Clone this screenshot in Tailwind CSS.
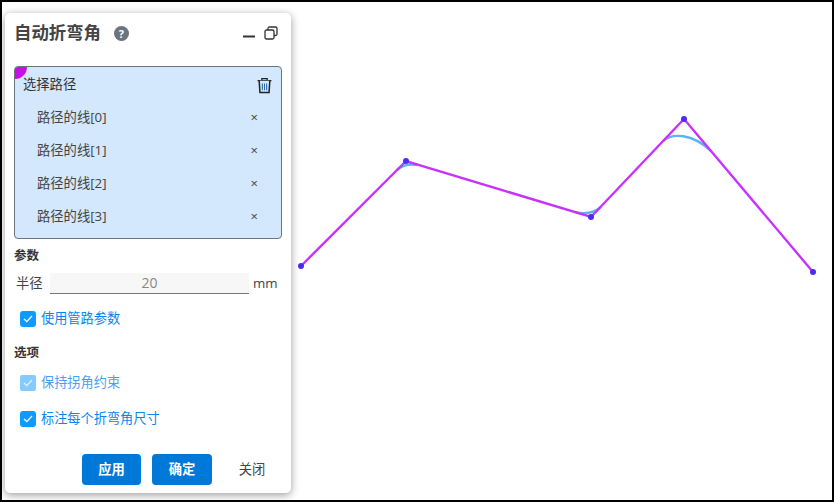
<!DOCTYPE html>
<html lang="zh">
<head>
<meta charset="UTF-8" />
<title>自动折弯角</title>
<script src="https://cdn.jsdelivr.net/npm/@tailwindcss/browser@4"></script>
</head>
<body class="bg-white">
<div class="relative w-[834px] h-[502px] overflow-hidden bg-white border-2 border-black font-['Open_Sans','Noto_Sans_CJK_SC',sans-serif] text-[#333]">

  <!-- canvas, shifted -2px for the border -->
  <svg class="absolute left-[-2px] top-[-2px]" width="834" height="502" viewBox="0 0 834 502" fill="none">
    <path d="M397 170Q405 163 417 165" stroke="#5cb3fa" stroke-width="2.4" />
    <path d="M575 212Q590 216 601 207" stroke="#5cb3fa" stroke-width="2.4" />
    <path d="M663 141C672 133 692 133 711 151" stroke="#5cb3fa" stroke-width="2.4" />
    <path d="M301 266L406 161L591 217L684 119L813 272" stroke="#c832ff" stroke-width="2.4" />
    <g fill="#4b2cf5">
      <circle cx="301" cy="266" r="3" />
      <circle cx="406" cy="161" r="3" />
      <circle cx="591" cy="217" r="3" />
      <circle cx="684" cy="119" r="3" />
      <circle cx="813" cy="272" r="3" />
    </g>
  </svg>

  <!-- dialog -->
  <div class="absolute left-[3px] top-[11px] w-[286px] h-[480px] bg-white rounded-[5px] shadow-[0_2px_8px_rgba(0,0,0,0.4)] flex flex-col pl-[9px] pr-[9px]">
    <div class="flex items-center h-[40px] shrink-0">
      <span class="text-[17.4px] font-bold text-[#444] leading-none">自动折弯角</span>
      <span class="ml-[13px] w-[15px] h-[15px] rounded-full bg-[#6c757d] text-white text-[11px] font-bold flex items-center justify-center leading-none">?</span>
      <svg class="ml-auto" width="14" height="14" viewBox="0 0 14 14" fill="none"><path d="M1 10.5H13" stroke="#333" stroke-width="2"/></svg>
      <svg class="ml-[8px] mr-[4px]" width="14" height="14" viewBox="0 0 14 14" fill="none" stroke="#333" stroke-width="1.3"><rect x="1" y="4" width="9" height="9" rx="1.5"/><path d="M4 4V2.5Q4 1 5.5 1H11.5Q13 1 13 2.5V8Q13 9.5 11.5 9.5H10"/></svg>
    </div>

    <!-- selection list -->
    <div class="relative mt-[13px] h-[173px] shrink-0 bg-[#d3e7fd] border border-[#6c757d] rounded-[4px] overflow-hidden">
      <div class="absolute left-[-12px] top-[-12px] w-[24px] h-[24px] rounded-full bg-[#c80fe8]"></div>
      <div class="flex items-center justify-between h-[36px] pl-[8px] pr-[9px] text-[13.3px]">
        <span>选择路径</span>
        <svg width="15" height="17" viewBox="0 0 14 16" fill="none">
          <path d="M0.5 3.5H13.5M4.5 3V1.5H9.5V3" stroke="#222" stroke-width="1.2"/>
          <path d="M2 3.5L2.7 14.5H11.3L12 3.5" stroke="#222" stroke-width="1.4" fill="#d3e7fd"/>
          <path d="M5 6V12.5M7 6V12.5M9 6V12.5" stroke="#2b6cb0" stroke-width="1"/>
        </svg>
      </div>
      <div class="flex flex-col mt-[-2px] text-[13.3px] text-[#444]">
        <div class="flex items-center justify-between h-[33px] pl-[22px] pr-[23px]"><span>路径的线[0]</span><span class="text-[13px] leading-none">×</span></div>
        <div class="flex items-center justify-between h-[33px] pl-[22px] pr-[23px]"><span>路径的线[1]</span><span class="text-[13px] leading-none">×</span></div>
        <div class="flex items-center justify-between h-[33px] pl-[22px] pr-[23px]"><span>路径的线[2]</span><span class="text-[13px] leading-none">×</span></div>
        <div class="flex items-center justify-between h-[33px] pl-[22px] pr-[23px]"><span>路径的线[3]</span><span class="text-[13px] leading-none">×</span></div>
      </div>
    </div>

    <div class="mt-[8px] text-[12.5px] font-bold leading-[18px]">参数</div>
    <div class="flex items-center mt-[8px] h-[21px] text-[13.3px]">
      <span class="ml-[2px] w-[34px] text-[#444]">半径</span>
      <div class="w-[199px] h-[21px] bg-[#f7f7f7] border-b border-[#777] text-center text-[#888] text-[14px] leading-[20px]">20</div>
      <span class="ml-[4px] text-[#444]">mm</span>
    </div>
    <label class="flex items-center mt-[16px] ml-[6px] h-[18px] text-[13.2px] text-[#0a84f0]">
      <span class="w-[16px] h-[16px] rounded-[3px] bg-[#0d9bff] flex items-center justify-center"><svg width="10" height="8" viewBox="0 0 10 8" fill="none"><path d="M1 4L3.8 6.6L9 1" stroke="#fff" stroke-width="1.3"/></svg></span>
      <span class="ml-[5px]">使用管路参数</span>
    </label>

    <div class="mt-[16px] text-[12.5px] font-bold leading-[18px]">选项</div>
    <label class="flex items-center mt-[12px] ml-[6px] h-[18px] text-[13.2px] text-[#4a9ff5]">
      <span class="w-[16px] h-[16px] rounded-[2px] bg-[#86cbff] flex items-center justify-center"><svg width="10" height="8" viewBox="0 0 10 8" fill="none"><path d="M1 4L3.8 6.6L9 1" stroke="#dff1ff" stroke-width="1.3"/></svg></span>
      <span class="ml-[5px]">保持拐角约束</span>
    </label>
    <label class="flex items-center mt-[18px] ml-[6px] h-[18px] text-[13.2px] text-[#0a84f0]">
      <span class="w-[16px] h-[16px] rounded-[3px] bg-[#0d9bff] flex items-center justify-center"><svg width="10" height="8" viewBox="0 0 10 8" fill="none"><path d="M1 4L3.8 6.6L9 1" stroke="#fff" stroke-width="1.3"/></svg></span>
      <span class="ml-[5px]">标注每个折弯角尺寸</span>
    </label>

    <div class="flex items-center mt-[26px] text-[13.3px] ml-[68px]">
      <button class="w-[59px] h-[31px] bg-[#0078d7] text-white font-bold rounded-[4px]">应用</button>
      <button class="ml-[11px] w-[60px] h-[31px] bg-[#0078d7] text-white font-bold rounded-[4px]">确定</button>
      <button class="ml-[20px] w-[40px] h-[31px] text-[#444] text-center">关闭</button>
    </div>
  </div>
</div>
</body>
</html>
